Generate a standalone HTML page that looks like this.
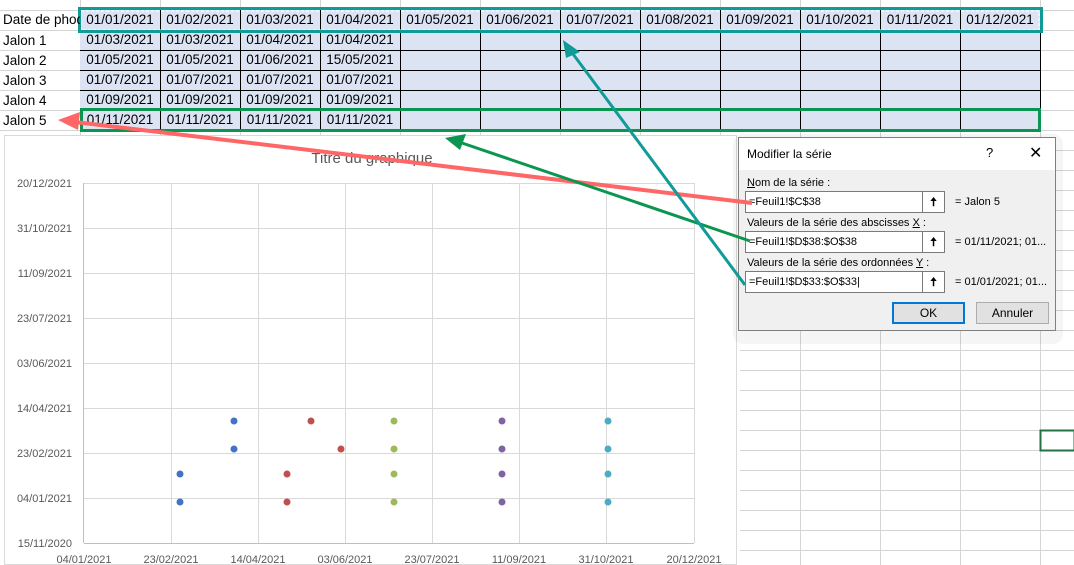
<!DOCTYPE html>
<html><head><meta charset="utf-8"><style>
*{margin:0;padding:0;box-sizing:border-box}
body{width:1074px;height:565px;overflow:hidden;background:#fff;font-family:"Liberation Sans",sans-serif;position:relative}
.a{position:absolute}
.c{position:absolute;font-size:13px;color:#000;line-height:20px;white-space:nowrap;overflow:hidden}
.dlg{font-family:"Liberation Sans",sans-serif;font-size:11px;white-space:nowrap}
.in{position:absolute;left:6px;width:200px;height:22px;background:#fff;border:1px solid #7a7a7a;font-size:11px;line-height:20px;padding-left:3px}
.btn{position:absolute;right:0;top:0;width:22px;height:20px;border-left:1px solid #7a7a7a;text-align:center;font-size:12px;font-weight:bold}
.lb{position:absolute;left:8px;font-size:11px}
.rv{position:absolute;left:216px;font-size:11px}
.r span{width:80px;text-align:center;font-size:13.5px}
</style></head><body>
<svg class="a" style="left:0;top:0" width="1074" height="565">
<g stroke="#d4d4d4" stroke-width="1">
<line x1="0" y1="10.5" x2="1074" y2="10.5"/>
<line x1="0" y1="30.5" x2="1074" y2="30.5"/><line x1="0" y1="50.5" x2="1074" y2="50.5"/><line x1="0" y1="70.5" x2="1074" y2="70.5"/><line x1="0" y1="90.5" x2="1074" y2="90.5"/><line x1="0" y1="110.5" x2="1074" y2="110.5"/><line x1="0" y1="130.5" x2="1074" y2="130.5"/>
<line x1="740" y1="150.5" x2="1074" y2="150.5"/><line x1="740" y1="170.5" x2="1074" y2="170.5"/><line x1="740" y1="190.5" x2="1074" y2="190.5"/><line x1="740" y1="210.5" x2="1074" y2="210.5"/><line x1="740" y1="230.5" x2="1074" y2="230.5"/><line x1="740" y1="250.5" x2="1074" y2="250.5"/><line x1="740" y1="270.5" x2="1074" y2="270.5"/><line x1="740" y1="290.5" x2="1074" y2="290.5"/><line x1="740" y1="310.5" x2="1074" y2="310.5"/><line x1="740" y1="330.5" x2="1074" y2="330.5"/>
<line x1="740" y1="350.5" x2="1074" y2="350.5"/><line x1="740" y1="370.5" x2="1074" y2="370.5"/><line x1="740" y1="390.5" x2="1074" y2="390.5"/><line x1="740" y1="410.5" x2="1074" y2="410.5"/><line x1="740" y1="430.5" x2="1074" y2="430.5"/><line x1="740" y1="450.5" x2="1074" y2="450.5"/><line x1="740" y1="470.5" x2="1074" y2="470.5"/><line x1="740" y1="490.5" x2="1074" y2="490.5"/><line x1="740" y1="510.5" x2="1074" y2="510.5"/><line x1="740" y1="530.5" x2="1074" y2="530.5"/><line x1="740" y1="550.5" x2="1074" y2="550.5"/>
<line x1="800.5" y1="0" x2="800.5" y2="565"/><line x1="880.5" y1="0" x2="880.5" y2="565"/><line x1="960.5" y1="0" x2="960.5" y2="565"/><line x1="1040.5" y1="0" x2="1040.5" y2="565"/>
<line x1="80.5" y1="0" x2="80.5" y2="135"/><line x1="160.5" y1="0" x2="160.5" y2="135"/><line x1="240.5" y1="0" x2="240.5" y2="135"/><line x1="320.5" y1="0" x2="320.5" y2="135"/><line x1="400.5" y1="0" x2="400.5" y2="135"/><line x1="480.5" y1="0" x2="480.5" y2="135"/><line x1="560.5" y1="0" x2="560.5" y2="135"/><line x1="640.5" y1="0" x2="640.5" y2="135"/><line x1="720.5" y1="0" x2="720.5" y2="135"/>
</g>
<rect x="80" y="10" width="961" height="121" fill="#dce4f4"/>
<g stroke="#000" stroke-width="1">
<line x1="80" y1="30.5" x2="1041" y2="30.5"/><line x1="80" y1="50.5" x2="1041" y2="50.5"/><line x1="80" y1="70.5" x2="1041" y2="70.5"/><line x1="80" y1="90.5" x2="1041" y2="90.5"/><line x1="80" y1="110.5" x2="1041" y2="110.5"/><line x1="80" y1="130.5" x2="1041" y2="130.5"/>
<line x1="160.5" y1="10" x2="160.5" y2="131"/><line x1="240.5" y1="10" x2="240.5" y2="131"/><line x1="320.5" y1="10" x2="320.5" y2="131"/><line x1="400.5" y1="10" x2="400.5" y2="131"/><line x1="480.5" y1="10" x2="480.5" y2="131"/><line x1="560.5" y1="10" x2="560.5" y2="131"/><line x1="640.5" y1="10" x2="640.5" y2="131"/><line x1="720.5" y1="10" x2="720.5" y2="131"/><line x1="800.5" y1="10" x2="800.5" y2="131"/><line x1="880.5" y1="10" x2="880.5" y2="131"/><line x1="960.5" y1="10" x2="960.5" y2="131"/><line x1="1040.5" y1="10" x2="1040.5" y2="131"/>
</g>
<rect x="81" y="11" width="958" height="19" fill="none" stroke="#fff" stroke-dasharray="3 2"/>
<rect x="79.5" y="8.5" width="962" height="23" fill="none" stroke="#109b96" stroke-width="3"/>
<rect x="81.5" y="109.5" width="958" height="21" fill="none" stroke="#0a9650" stroke-width="3"/>
<rect x="1040.5" y="430.5" width="34" height="20" fill="none" stroke="#217346" stroke-width="2"/>
</svg>
<div class="c" style="left:3px;top:10px;width:77px;font-size:13.5px">Date de phoque</div>
<div class="c" style="left:3px;top:31px;font-size:13.5px">Jalon 1</div>
<div class="c" style="left:3px;top:51px;font-size:13.5px">Jalon 2</div>
<div class="c" style="left:3px;top:71px;font-size:13.5px">Jalon 3</div>
<div class="c" style="left:3px;top:91px;font-size:13.5px">Jalon 4</div>
<div class="c" style="left:3px;top:111px;font-size:13.5px">Jalon 5</div>
<div class="a r" style="left:80px;top:10px;line-height:20px">
<div style="display:flex">
<span>01/01/2021</span><span>01/02/2021</span><span>01/03/2021</span><span>01/04/2021</span><span>01/05/2021</span><span>01/06/2021</span><span>01/07/2021</span><span>01/08/2021</span><span>01/09/2021</span><span>01/10/2021</span><span>01/11/2021</span><span>01/12/2021</span></div>
<div style="display:flex"><span>01/03/2021</span><span>01/03/2021</span><span>01/04/2021</span><span>01/04/2021</span></div>
<div style="display:flex"><span>01/05/2021</span><span>01/05/2021</span><span>01/06/2021</span><span>15/05/2021</span></div>
<div style="display:flex"><span>01/07/2021</span><span>01/07/2021</span><span>01/07/2021</span><span>01/07/2021</span></div>
<div style="display:flex"><span>01/09/2021</span><span>01/09/2021</span><span>01/09/2021</span><span>01/09/2021</span></div>
<div style="display:flex"><span>01/11/2021</span><span>01/11/2021</span><span>01/11/2021</span><span>01/11/2021</span></div>
</div>
<!-- chart -->
<div class="a" style="left:4px;top:135px;width:733px;height:430px;background:#fff;border:1px solid #d9d9d9"></div>
<svg class="a" style="left:0;top:0" width="740" height="565" font-family="Liberation Sans Narrow, Liberation Sans, sans-serif" font-size="11" fill="#595959">
<text x="372" y="163" font-size="15" text-anchor="middle" fill="#595959">Titre du graphique</text>
<g stroke="#d9d9d9">
<line x1="84" y1="183.5" x2="694" y2="183.5"/><line x1="84" y1="228.5" x2="694" y2="228.5"/><line x1="84" y1="273.5" x2="694" y2="273.5"/><line x1="84" y1="318.5" x2="694" y2="318.5"/><line x1="84" y1="363.5" x2="694" y2="363.5"/><line x1="84" y1="408.5" x2="694" y2="408.5"/><line x1="84" y1="453.5" x2="694" y2="453.5"/><line x1="84" y1="498.5" x2="694" y2="498.5"/>
<line x1="171.5" y1="183" x2="171.5" y2="543"/><line x1="258.5" y1="183" x2="258.5" y2="543"/><line x1="345.5" y1="183" x2="345.5" y2="543"/><line x1="432.5" y1="183" x2="432.5" y2="543"/><line x1="519.5" y1="183" x2="519.5" y2="543"/><line x1="606.5" y1="183" x2="606.5" y2="543"/><line x1="694.5" y1="183" x2="694.5" y2="543"/>
</g>
<g stroke="#bfbfbf"><line x1="84" y1="543.5" x2="694" y2="543.5"/><line x1="83.5" y1="183" x2="83.5" y2="543"/></g>
<g text-anchor="end">
<text x="72" y="187">20/12/2021</text><text x="72" y="232">31/10/2021</text><text x="72" y="277">11/09/2021</text><text x="72" y="322">23/07/2021</text><text x="72" y="367">03/06/2021</text><text x="72" y="412">14/04/2021</text><text x="72" y="457">23/02/2021</text><text x="72" y="502">04/01/2021</text><text x="72" y="547">15/11/2020</text>
</g>
<g text-anchor="middle">
<text x="84" y="563">04/01/2021</text><text x="171" y="563">23/02/2021</text><text x="258" y="563">14/04/2021</text><text x="345" y="563">03/06/2021</text><text x="432" y="563">23/07/2021</text><text x="519" y="563">11/09/2021</text><text x="606" y="563">31/10/2021</text><text x="694" y="563">20/12/2021</text>
</g>
<g fill="#4472c4"><circle cx="180" cy="502" r="3.5"/><circle cx="180" cy="474" r="3.5"/><circle cx="234" cy="449" r="3.5"/><circle cx="234" cy="421" r="3.5"/></g>
<g fill="#c0504d"><circle cx="287" cy="502" r="3.5"/><circle cx="287" cy="474" r="3.5"/><circle cx="341" cy="449" r="3.5"/><circle cx="311" cy="421" r="3.5"/></g>
<g fill="#9bbb59"><circle cx="394" cy="502" r="3.5"/><circle cx="394" cy="474" r="3.5"/><circle cx="394" cy="449" r="3.5"/><circle cx="394" cy="421" r="3.5"/></g>
<g fill="#8064a2"><circle cx="502" cy="502" r="3.5"/><circle cx="502" cy="474" r="3.5"/><circle cx="502" cy="449" r="3.5"/><circle cx="502" cy="421" r="3.5"/></g>
<g fill="#4bacc6"><circle cx="608" cy="502" r="3.5"/><circle cx="608" cy="474" r="3.5"/><circle cx="608" cy="449" r="3.5"/><circle cx="608" cy="421" r="3.5"/></g>
</svg>
<!-- dialog -->
<div class="a" style="left:733px;top:134px;width:330px;height:210px;background:rgba(0,0,0,0.04);border-radius:10px"></div>
<div class="a dlg" style="left:738px;top:137px;width:318px;height:194px;background:#f0f0f0;border:1px solid #7f7f7f">
<div style="height:32px;background:#fff;position:relative">
<span style="position:absolute;left:8px;top:9px;font-size:12px">Modifier la série</span>
<span style="position:absolute;left:247px;top:7px;font-size:13px">?</span>
<span style="position:absolute;left:290px;top:5px;font-size:16px">✕</span>
</div>
<div class="lb" style="top:39px"><u>N</u>om de la série :</div>
<div class="in" style="top:53px">=Feuil1!$C$38<div class="btn">🠅</div></div>
<div class="rv" style="top:58px">= Jalon 5</div>
<div class="lb" style="top:79px">Valeurs de la série des abscisses <u>X</u> :</div>
<div class="in" style="top:93px">=Feuil1!$D$38:$O$38<div class="btn">🠅</div></div>
<div class="rv" style="top:98px">= 01/11/2021; 01...</div>
<div class="lb" style="top:119px">Valeurs de la série des ordonnées <u>Y</u> :</div>
<div class="in" style="top:133px">=Feuil1!$D$33:$O$33|<div class="btn">🠅</div></div>
<div class="rv" style="top:138px">= 01/01/2021; 01...</div>
<div style="position:absolute;left:153px;top:164px;width:73px;height:22px;border:2px solid #0078d7;background:#e1e1e1;text-align:center;line-height:18px;font-size:12px">OK</div>
<div style="position:absolute;left:237px;top:164px;width:73px;height:22px;border:1px solid #adadad;background:#e1e1e1;text-align:center;line-height:20px;font-size:12px">Annuler</div>
</div>
<!-- arrows -->
<svg class="a" style="left:0;top:0" width="1074" height="565">
<line x1="752" y1="203" x2="75" y2="122" stroke="#ff6666" stroke-width="4"/>
<polygon points="58,120 80,112 78,130" fill="#ff6666"/>
<line x1="750" y1="241" x2="462" y2="143" stroke="#0a9650" stroke-width="3"/>
<polygon points="445,138 466,134 460,150" fill="#0a9650"/>
<line x1="745" y1="285" x2="573" y2="54" stroke="#109b96" stroke-width="3"/>
<polygon points="563,40 580,52 566,58" fill="#109b96"/>
</svg>
</body></html>
